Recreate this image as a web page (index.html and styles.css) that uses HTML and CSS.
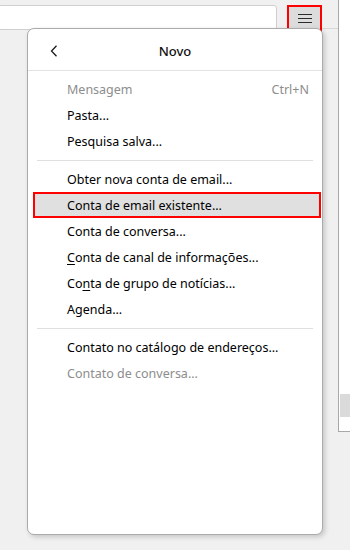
FILE: index.html
```html
<!DOCTYPE html>
<html lang="pt">
<head>
    <meta charset="UTF-8">
    <meta name="viewport" content="width=device-width, initial-scale=1.0">
    <title>Novo</title>
    <link rel="stylesheet" href="styles.css">
</head>
<body>
    <div class="window">
        <div class="toolbar">
            <div class="search"></div>
            <div class="menu-btn">
                <svg width="14" height="10" viewBox="0 0 14 10">
                    <path d="M0 0.5H14M0 4.5H14M0 8.5H14" stroke="#2b2b2b" stroke-width="1"/>
                </svg>
            </div>
        </div>
        <div class="main">
            <div class="content"></div>
            <div class="sidebar">
                <div class="sidebar-block"></div>
            </div>
        </div>

        <div class="panel">
            <div class="panel-header">
                <svg class="back" width="8" height="12" viewBox="0 0 8 12">
                    <path d="M6.5 0.8L1.5 6L6.5 11.2" fill="none" stroke="#1a1a1a" stroke-width="1.3"/>
                </svg>
                <span class="title">Novo</span>
            </div>
            <div class="items">
                <div class="item disabled"><span>Mensagem</span><span class="key">Ctrl+N</span></div>
                <div class="item"><span>Pasta...</span></div>
                <div class="item"><span>Pesquisa salva...</span></div>
                <div class="sep"></div>
                <div class="item"><span>Obter nova conta de email...</span></div>
                <div class="item active"><span>Conta de email existente...</span></div>
                <div class="item"><span>Conta de conversa...</span></div>
                <div class="item"><span><u>C</u>onta de canal de informações...</span></div>
                <div class="item"><span>Co<u>n</u>ta de grupo de notícias...</span></div>
                <div class="item"><span>Agenda...</span></div>
                <div class="sep"></div>
                <div class="item"><span>Contato no catálogo de endereços...</span></div>
                <div class="item disabled"><span>Contato de conversa...</span></div>
            </div>
        </div>
    </div>
</body>
</html>
```

FILE: styles.css
```css
body {
    margin: 0;
    background: #f0f0f0;
    font-family: "Noto Sans", "Open Sans", sans-serif;
    color: #000;
}
.window {
    position: relative;
    width: 350px;
    height: 550px;
    overflow: hidden;
}
.toolbar {
    display: flex;
    align-items: flex-start;
    height: 29px;
    padding-top: 5px;
    box-sizing: border-box;
    border-bottom: 1px solid #d8d8d8;
}
.search {
    width: 277px;
    height: 23px;
    margin-left: -2px;
    background: #fff;
    border: 1px solid #cfcfcf;
    border-radius: 3px;
}
.menu-btn {
    width: 31px;
    height: 23px;
    margin-left: 10px;
    background: #dcdcdc;
    border: 2px solid #ff0000;
    display: flex;
    align-items: center;
    justify-content: center;
}
.main {
    display: flex;
    height: 520px;
}
.content {
    flex: 1;
}
.sidebar {
    width: 12px;
    height: 433px;
    margin-top: -30px;
    background: #fff;
    border-left: 1px solid #a8a8a8;
    border-bottom: 1px solid #a8a8a8;
    padding-top: 395px;
    box-sizing: border-box;
}
.sidebar-block {
    height: 23px;
    margin-left: 1px;
    background: #dadada;
}
.panel {
    position: absolute;
    left: 27px;
    top: 28px;
    width: 296px;
    height: 507px;
    box-sizing: border-box;
    background: #fff;
    border: 1px solid #ababab;
    border-radius: 7px;
    box-shadow: 2px 2px 5px rgba(0, 0, 0, 0.18);
    font-size: 12.5px;
}
.panel-header {
    position: relative;
    height: 42px;
    padding-top: 2px;
    box-sizing: border-box;
    display: flex;
    align-items: center;
    justify-content: center;
    border-bottom: 1px solid #e2e2e2;
}
.back {
    position: absolute;
    left: 22px;
    top: 16px;
}
.title {
    font-size: 13px;
    font-weight: 500;
    color: #111;
}
.items {
    padding-top: 5px;
}
.item {
    display: flex;
    justify-content: space-between;
    align-items: center;
    height: 26px;
    margin: 0 1px 0 5px;
    padding: 0 12px 0 34px;
    box-sizing: border-box;
}
.item.disabled {
    color: #8d8d8d;
}
.item.active {
    background: #e0e0e0;
    border: 2px solid #ff0000;
    padding-left: 32px;
}
.key {
    color: #8d8d8d;
}
.sep {
    height: 1px;
    background: #e0e0e0;
    margin: 6px 9px 5px 9px;
}
u {
    text-decoration-thickness: 1px;
    text-underline-offset: 2px;
}
```
